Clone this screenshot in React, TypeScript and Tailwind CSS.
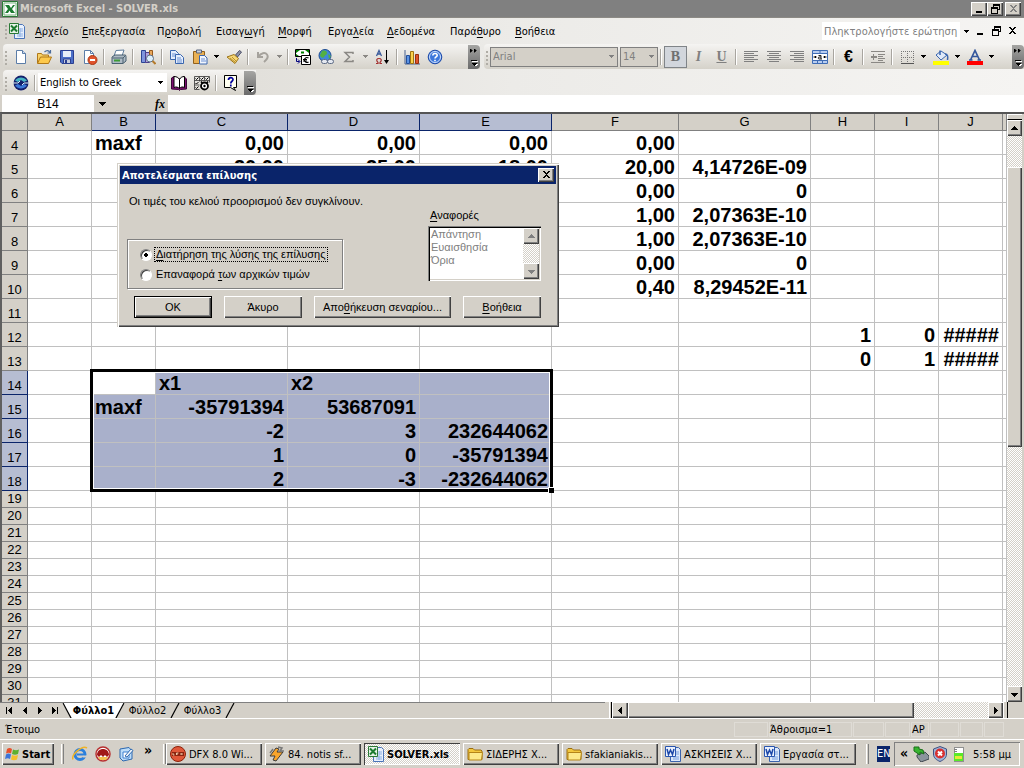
import type { ReactNode } from 'react';
import clsx from 'clsx';

const RAISED = 'bg-[#d4d0c8] shadow-[inset_1px_1px_0_#ffffff,inset_-1px_-1px_0_#404040,inset_-2px_-2px_0_#808080]';
const HATCH = 'bg-[repeating-conic-gradient(#ffffff_0%_25%,#d4d0c8_0%_50%)] bg-[length:2px_2px]';
const BAR = 'bg-gradient-to-b from-[#f5f4f2] to-[#d5d2ca] rounded-l-sm';

// "_" marks the letter that carries the keyboard accelerator
function Accel({ text }: { text: string }) {
  const i = text.indexOf('_');
  if (i < 0) return <>{text}</>;
  return (
    <span>
      {text.slice(0, i)}
      <u className="underline-offset-2">{text[i + 1]}</u>
      {text.slice(i + 2)}
    </span>
  );
}

function Svg({ children, className = 'w-4 h-4', box = '0 0 16 16', crisp = false }: { children: ReactNode; className?: string; box?: string; crisp?: boolean }) {
  return (
    <svg viewBox={box} className={clsx('shrink-0', className)} fill="none" shapeRendering={crisp ? 'crispEdges' : undefined} aria-hidden="true">
      {children}
    </svg>
  );
}

function Arrow({ dir = 'down', color = '#000' }: { dir?: 'down' | 'up' | 'left' | 'right'; color?: string }) {
  const d = {
    down: 'M0 2h7v1H0zM1 3h5v1H1zM2 4h3v1H2zM3 5h1v1H3z',
    up: 'M3 1h1v1H3zM2 2h3v1H2zM1 3h5v1H1zM0 4h7v1H0z',
    left: 'M4 0h1v7H4zM3 1h1v5H3zM2 2h1v3H2zM1 3h1v1H1z',
    right: 'M2 0h1v7H2zM3 1h1v5H3zM4 2h1v3H4zM5 3h1v1H5z',
  }[dir];
  return (
    <Svg box="0 0 7 7" className="w-[7px] h-[7px]" crisp>
      <path d={d} fill={color} />
    </Svg>
  );
}

function SmallArrow({ color = '#000' }: { color?: string }) {
  return (
    <Svg box="0 0 5 3" className="w-[5px] h-[3px]" crisp>
      <path d="M0 0h5v1H0zM1 1h3v1H1zM2 2h1v1H2z" fill={color} />
    </Svg>
  );
}

const excelIcon = (
  <Svg>
    <path d="M.5.5h15v15H.5z" fill="#eef6ee" stroke="#2b7a36" />
    <path d="M2 2h12v12H2z" fill="#fff" stroke="#7db584" />
    <path d="M3 4h4l2 3 2-3h2l-3 4 3 4H9L7.500 9.500 6 12H3l3-4z" fill="#1c7c30" />
  </Svg>
);

const excelDoc = (
  <Svg>
    <path d="M5.500 1.500h8l2 2v12h-10z" fill="#e8f0fc" stroke="#4a74b8" />
    <path d="M11 6h3M11 8h3M8 11h6M8 13h6M11 5v9" stroke="#8db0e4" />
    <path d="M.5.500h9v10h-9z" fill="#e7f3e8" stroke="#2b7a36" />
    <path d="m2 2.500 6 6M8 2.500l-6 6" stroke="#1c7c30" strokeWidth="2" />
  </Svg>
);

const wordDoc = (
  <Svg>
    <path d="M5.500 1.500h8l2 2v12h-10z" fill="#dce8fb" stroke="#3a62ac" />
    <path d="M11 6h3M11 8h3M8 11h6M8 13h6" stroke="#7b9fdc" />
    <path d="M.5.500h10v10H.5z" fill="#eaf1fd" stroke="#2a56b0" />
    <path d="m2 3 1.500 5.500L5.500 4l2 4.500L9 3" stroke="#1b46a8" strokeWidth="1.500" />
  </Svg>
);

const folder = (
  <Svg>
    <path d="M1 13.500V3.500L2 2.500h4l1.500 1.500H14l1 1v8.500z" fill="#f3c73e" stroke="#9a6d10" />
    <path d="M2 6.500h13.500l-1 7.500H2z" fill="#fde98a" stroke="#b58418" />
  </Svg>
);

const icons = {
  blank: <Svg><path d="M3.500 1.500h6l3 3v10h-9z" fill="#fff" stroke="#5b7da8" /><path d="M9.500 1.500v3h3" fill="#cfdcf0" stroke="#5b7da8" /></Svg>,
  open: (
    <Svg>
      <path d="M1.500 14V4.500h4l1 1.500h6V8" fill="#f8d268" stroke="#b07818" />
      <path d="m1.500 14.500 3-6.500h11l-3 6.500z" fill="#fdc94c" stroke="#b07818" />
      <path d="M8.500 3c2-2 4-2 5.500.5M14.500 1v3h-3" stroke="#4d6d9c" strokeWidth="1.200" />
    </Svg>
  ),
  save: <Svg><path d="M1.500 1.500h13v13H3l-1.500-1.500z" fill="#4c6fc8" stroke="#2b3f90" /><path d="M4 2h8v6H4z" fill="#e6edf9" /><path d="M4.500 10h7v4.500h-7z" fill="#c7cede" stroke="#2b3f90" /><path d="M6 11h2v3H6z" fill="#2b3f90" /></Svg>,
  permission: <Svg><path d="M2.500 1.500h6l3 3v10h-9z" fill="#fff" stroke="#5b7da8" /><path d="M8.500 1.500v3h3" stroke="#5b7da8" /><circle cx="10.500" cy="11" r="4.500" fill="#e0532c" stroke="#a93814" /><path d="M8 11h5" stroke="#fff" strokeWidth="2" /></Svg>,
  print: <Svg><path d="m5 1.500 8-.5-2 6H3z" fill="#fff" stroke="#5d7c9c" /><path d="m1 8 3-2h10.500l.5 1.500V12l-3 2.500H1z" fill="#aebac4" stroke="#4a6070" /><path d="M1.500 9H12l2-2M12 9v5" stroke="#4a6070" /><path d="M3 11.500h6" stroke="#3d9c36" strokeWidth="2" /></Svg>,
  research: <Svg><path d="M1.500 1.500h4v12h-4z" fill="#7f94dc" stroke="#2c4594" /><path d="M5.500 3.500h4v10h-4z" fill="#b0a3dc" stroke="#4b3f8e" /><path d="M9.500 1.500h3v6h-3z" fill="#e9a85c" stroke="#985a1c" /><circle cx="10" cy="9.500" r="3.500" fill="#dceffc" stroke="#5f7188" /><path d="m12.500 12 3 3" stroke="#b47b2c" strokeWidth="2" /></Svg>,
  copy: <Svg><path d="M1.500 1.500h5l3 3v6h-8z" fill="#e5eefc" stroke="#3a66ae" /><path d="M3 5h4M3 7h4" stroke="#6c92d4" /><path d="M6.500 5.500h5l3 3v6h-8z" fill="#e5eefc" stroke="#3a66ae" /><path d="M8 9h4M8 11h5M8 13h5" stroke="#6c92d4" /></Svg>,
  paste: <Svg><path d="M1.500 2.500h11v12h-11z" fill="#eab153" stroke="#91601c" /><path d="M4.500 1h5v3h-5z" fill="#c9cfda" stroke="#58647c" /><path d="M7.500 6.500h5l2.500 2.500v6H7.500z" fill="#f1f5fd" stroke="#3a66ae" /><path d="M9 10h4M9 12h5" stroke="#6c92d4" /></Svg>,
  brush: <Svg><path d="m9.500 6 4-4.500 2 1.500-4 5z" fill="#8d93a8" stroke="#4c4f66" /><path d="m1 8 7-2.500 4.500 4-3.500 5z" fill="#f6d775" stroke="#9c7418" /><path d="m4 9 5 4M6 8l4 4" stroke="#b88e2c" /></Svg>,
  undo: <Svg><path d="M3 3v5h5M3.500 7.500C6 4 10 3 12 5.500s0 5-3 7.500" stroke="#a5a29c" strokeWidth="2" /></Svg>,
  euro: (
    <Svg>
      <path d="M.5.500h14v7H.5z" fill="#fff" stroke="#000" />
      <path d="M1 1h4L1 4zM14 1h-4l4 3zM1 7V5l3 2z" fill="#008000" />
      <path d="M6 3.500h3" stroke="#008000" strokeWidth="2" />
      <path d="M6.500 6.500h9v9h-9z" fill="#fff" stroke="#000" />
      <path d="M13.500 9c-1.500-1-4-.5-4 2s2.500 3 4 2M8 10.500h4M8 12h4" stroke="#000" strokeWidth="1.200" />
      <path d="M1.500 9v3.500h3M3 10.500l2 2-2 2" stroke="#00007f" />
    </Svg>
  ),
  link: <Svg><circle cx="7" cy="6.500" r="6" fill="#3f87dc" stroke="#1c4a90" /><path d="M4 2c3-1 5 0 5 2s-2 2-3 4-4 0-4-2zM10 5l3 2-2 3z" fill="#53b045" /><rect x="3.500" y="10.500" width="6" height="4" rx="2" fill="#e4e8f0" stroke="#5d6b84" /><rect x="9.500" y="10.500" width="6" height="4" rx="2" fill="#e4e8f0" stroke="#5d6b84" /></Svg>,
  sigma: <Svg><path d="M12 5V3.500H4L8.500 8 4 12.500h8V11" stroke="#8a8884" strokeWidth="1.500" /></Svg>,
  sort: <Svg><path d="M1.500 7 4 1.500 6.500 7M2.500 5h3" stroke="#3a5b9c" strokeWidth="1.300" /><path d="M1 14.500h2v-1C.5 11 2 9.500 4 9.500s3.500 1.500 1 4v1h2" stroke="#a33030" strokeWidth="1.200" /><path d="M11.500 1v12" stroke="#000" /><path d="M9 11h5l-2.500 4z" fill="#000" /></Svg>,
  chart: <Svg><path d="M1 1v14h15" stroke="#4a6390" /><path d="M2.500 6.500h3v8h-3z" fill="#5b93e4" stroke="#24509c" /><path d="M6.500 2.500h3v12h-3z" fill="#fbd24c" stroke="#a07510" /><path d="M11.500 5.500h3v9h-3z" fill="#e0552c" stroke="#97300e" /></Svg>,
  help: <Svg><circle cx="8" cy="8" r="6.800" fill="#3d78dc" stroke="#1d4aa8" /><circle cx="8" cy="8" r="5.500" stroke="#cfe0fa" /><path d="M5.800 6.500C5.800 3.800 10.200 3.800 10.200 6.300 10.200 8 8 7.800 8 9.500M8 10.800v1.400" stroke="#fff" strokeWidth="1.600" /></Svg>,
  alignLeft: <Svg crisp><path d="M1 2.500h14M1 4.500h10M1 6.500h14M1 8.500h10M1 10.500h14M1 12.500h10" stroke="#808080" /></Svg>,
  alignCenter: <Svg crisp><path d="M1 2.500h14M3 4.500h10M1 6.500h14M3 8.500h10M1 10.500h14M3 12.500h10" stroke="#808080" /></Svg>,
  alignRight: <Svg crisp><path d="M1 2.500h14M5 4.500h10M1 6.500h14M5 8.500h10M1 10.500h14M5 12.500h10" stroke="#808080" /></Svg>,
  merge: (
    <Svg>
      <path d="M.5 1.500h15v13H.5z" fill="#b8cdf0" stroke="#3f6cb4" />
      <path d="M8 2v2.500M5.500 12v2M10.500 12v2" stroke="#3f6cb4" />
      <path d="M.5 4.500h15v7H.5z" fill="#fff" stroke="#3f6cb4" />
      <path d="M1.500 8h3M11.500 8h3M3.500 7v2M12.500 7v2" stroke="#000" strokeWidth="1.200" />
      <path d="M6.500 6.500h2.500v3.500H7c-1 0-1-2 0-2h2M9 10h1" stroke="#222" />
    </Svg>
  ),
  indent: <Svg crisp><path d="M1 2.500h14M8 5.500h7M8 7.500h5M8 9.500h7M8 11.500h5M1 13.500h14" stroke="#8a8884" /><path d="M1 7h6v2H1zM3 5h1v6H3z" fill="#8a8884" /></Svg>,
  borders: <Svg crisp><path d="M2 2.500h13M2.500 2v12M14.500 2v12M8.500 2v12M2 8.500h13" stroke="#777" strokeDasharray="1 1" /><path d="M2 14.500h13" stroke="#555" /></Svg>,
  fill: <Svg><path d="m3 6 5-4 6 4-6 5z" fill="#dfe9f8" stroke="#3a66ae" /><path d="M7 6V1.500M12 5c3 0 3 3 2.500 6" stroke="#3a66ae" strokeWidth="1.500" /><path d="M0 12h16v4H0z" fill="#ffff00" /></Svg>,
  fontColor: <Svg><path d="M3.500 11 8 1.500 12.500 11M5 7.500h6M2 11h3.500M10.500 11H14" stroke="#33569c" strokeWidth="1.700" /><path d="M0 12h16v4H0z" fill="#ff0000" /></Svg>,
  globe: <Svg><circle cx="8" cy="8" r="7.500" fill="#14206c" /><path d="M2 5.500c3-4 9-4 12 0L11 7 8 5 5 7z" fill="#46b4c4" /><path d="M2 10.500c3 4 9 4 12 0L11 9l-3 2-3-2z" fill="#3c78d8" /><path d="M0 8h5l2-2M16 8h-5l-2 2" stroke="#d8ecf8" /></Svg>,
  book: (
    <Svg>
      <path d="M.5 3 3 1.500l5.500 2.500L13 1.500 15.500 4v10l-6 .500-1 1-1-1-7-.500z" fill="#7c1070" stroke="#3a0838" />
      <path d="M3 1.500c2.500 0 4.500 1 5.500 3v9C7 12 5 11.500 3 12.500zM13.500 1.500c-2.500 0-4 1-5 3v9c1-1.500 3-2 5-1z" fill="#fff" stroke="#000" />
    </Svg>
  ),
  checks: (
    <Svg>
      <path d="M.5 1.500h15v6M.5 1.500v13h5M.5 5.500h15M.5 10h5M5.500 1.500v5M10.500 1.500v4" stroke="#333" strokeWidth=".8" />
      <path d="m1.500 3.500 1 1 2-2M6.500 3.500l1 1 2-2M11.500 3.500l1 1 2-2M1.500 8l1 1 2-2M1.500 12.500l1 1 2-2" stroke="#000" />
      <circle cx="10.500" cy="11" r="3.500" fill="#fff" stroke="#000" strokeWidth="1.800" />
      <circle cx="10.500" cy="11" r="1.200" fill="#000" />
      <path d="m7 6.500 1.500 2M14 6.500l-1.500 2" stroke="#000" strokeWidth="1.500" />
    </Svg>
  ),
  question: <Svg><path d="M1.500.5h12v12h-3l2 3-5-3h-6z" fill="#fffff0" stroke="#000" /><path d="M5.500 5C5.500 2 10 2 10 4.500 10 6.500 7.800 6 7.800 8.500M7.800 9.500v2" stroke="#00009c" strokeWidth="1.700" /></Svg>,
};

function Tool({ label, children, pressed = false }: { label: string; children: ReactNode; pressed?: boolean }) {
  return (
    <button type="button" aria-label={label} className={clsx('w-[23px] h-[22px] shrink-0 flex items-center justify-center', pressed && 'border border-[#808488] bg-[#d2d6dc]')}>
      {children}
    </button>
  );
}

function DropTool({ label, color }: { label: string; color?: string }) {
  return (
    <button type="button" aria-label={label} className="w-[11px] h-[22px] shrink-0 flex items-center justify-center">
      <SmallArrow color={color} />
    </button>
  );
}

function Sep() {
  return (
    <span className="w-[6px] shrink-0 flex justify-center">
      <span className="w-[2px] h-4 border-l border-[#a8a59f] border-r border-r-white" />
    </span>
  );
}

function Grip() {
  return (
    <Svg box="0 0 6 20" className="w-[6px] h-5" crisp>
      <path d="M2 4h2v2H2M2 8h2v2H2M2 12h2v2H2M2 16h2v2H2" fill="#b0ada6" />
    </Svg>
  );
}

function Overflow({ more = true }: { more?: boolean }) {
  return (
    <button type="button" aria-label="Toolbar options" className="w-3 h-6 shrink-0 rounded-r-sm bg-gradient-to-b from-[#a5a5a3] to-[#6b6b6b] flex items-center justify-center">
      <Svg box="0 0 12 24" className="w-3 h-6" crisp>
        {more && <path d="M2 4h1v1h1v1H3v1H2zM6 4h1v1h1v1H7v1H6z" fill="#000" stroke="#000" strokeWidth=".5" />}
        <path d="M4 16h6v1H4zM5 19h5v1H5zM6 20h3v1H6z" fill="#fff" />
        <path d="M3 15h6v1H3zM4 18h5v1H4zM5 19h3v1H5zM6 20h1v1H6z" fill="#000" />
      </Svg>
    </button>
  );
}

const winGlyph = {
  min: <path d="M2 8h6v2H2z" fill="currentColor" />,
  restore: <path d="M3 1h7v6H8v4H1V4h2zM4 3v1h4v2h1V3zM2 6v4h5V6z" fill="currentColor" fillRule="evenodd" />,
  close: <path d="M2 2h2v1h1v1h1V3h1V2h2v1H8v1H7v1H6v1h1v1h1v1h1v1H7V8H6V7H5v1H4v1H2V8h1V7h1V6h1V5H4V4H3V3H2z" fill="currentColor" />,
};

function WinButton({ kind, label, flat = false, className }: { kind: keyof typeof winGlyph; label: string; flat?: boolean; className?: string }) {
  return (
    <button type="button" aria-label={label} className={clsx('w-4 h-[14px] shrink-0 flex items-center justify-center', !flat && RAISED, className)}>
      <Svg box="0 0 11 12" className="w-[11px] h-3" crisp>{winGlyph[kind]}</Svg>
    </button>
  );
}

const menu = [
  ['_Αρχείο', 'w-[47px]'],
  ['_Επεξεργασία', 'w-[75px]'],
  ['Π_ροβολή', 'w-[59px]'],
  ['Εισαγ_ωγή', 'w-[62px]'],
  ['_Μορφή', 'w-[50px]'],
  ['Εργα_λεία', 'w-[59px]'],
  ['_Δεδομένα', 'w-[63px]'],
  ['Παρά_θυρο', 'w-[65px]'],
  ['_Βοήθεια', 'w-[50px]'],
];

function Header() {
  return (
    <header className="shrink-0">
      <div className="h-[18px] bg-[#808080] text-[#d4d0c8] flex items-center pl-[2px] pr-[3px] border-b border-[#8c8a85]">
        {excelIcon}
        <h1 className="flex-1 pl-[2px] font-bold">Microsoft Excel - SOLVER.xls</h1>
        <WinButton kind="min" label="Minimize" className="text-black" />
        <WinButton kind="restore" label="Restore" className="text-black mr-[2px]" />
        <WinButton kind="close" label="Close" className="text-[#808080]" />
      </div>
      <div className="bg-gradient-to-r from-[#d8d5ce] via-[#ecebe8] to-[#f5f4f2]">
        <div className="h-[26px] flex items-center pl-[3px] pr-1">
          <Grip />
          {excelDoc}
          <nav className="flex pl-[10px] flex-1">
            {menu.map(([text, width]) => (
              <button key={text} type="button" className={clsx('text-left whitespace-nowrap', width)}><Accel text={text} /></button>
            ))}
          </nav>
          <input aria-label="Ask a question" placeholder="Πληκτρολογήστε ερώτηση" className="w-[138px] h-[18px] bg-white px-[2px] placeholder:text-[#808080] outline-none" />
          <span className="w-3 h-[18px] flex items-center justify-center"><SmallArrow /></span>
          <WinButton kind="min" label="Minimize workbook" flat />
          <WinButton kind="restore" label="Restore workbook" flat />
          <WinButton kind="close" label="Close workbook" flat />
        </div>
        <div className="flex gap-1 pl-[3px]">
          <div className={clsx('h-[25px] w-[477px] shrink-0 flex items-center', BAR)}>
            <Grip />
            <Tool label="New">{icons.blank}</Tool>
            <Tool label="Open">{icons.open}</Tool>
            <Tool label="Save">{icons.save}</Tool>
            <Tool label="Permission">{icons.permission}</Tool>
            <Sep />
            <Tool label="Print">{icons.print}</Tool>
            <Sep />
            <Tool label="Research">{icons.research}</Tool>
            <Sep />
            <Tool label="Copy">{icons.copy}</Tool>
            <Tool label="Paste">{icons.paste}</Tool>
            <DropTool label="Paste options" />
            <Tool label="Format painter">{icons.brush}</Tool>
            <Sep />
            <Tool label="Undo">{icons.undo}</Tool>
            <DropTool label="Undo list" color="#8a8884" />
            <Sep />
            <Tool label="Euro conversion">{icons.euro}</Tool>
            <Tool label="Hyperlink">{icons.link}</Tool>
            <Tool label="AutoSum">{icons.sigma}</Tool>
            <DropTool label="Functions" color="#8a8884" />
            <Tool label="Sort ascending">{icons.sort}</Tool>
            <Sep />
            <Tool label="Chart wizard">{icons.chart}</Tool>
            <Tool label="Help">{icons.help}</Tool>
            <span className="flex-1" />
            <Overflow />
          </div>
          <div className={clsx('h-[25px] flex-1 flex items-center', BAR)}>
            <Grip />
            <label className="relative w-[128px] shrink-0">
              <select aria-label="Font" disabled className="appearance-none w-full h-5 block bg-[#d4d0c8] border border-[#808080] px-[2px] text-[#808080] opacity-100">
                <option>Arial</option>
              </select>
              <span className="absolute right-1 top-2"><SmallArrow color="#808080" /></span>
            </label>
            <label className="relative w-[38px] shrink-0 ml-[2px]">
              <select aria-label="Font size" disabled className="appearance-none w-full h-5 block bg-[#d4d0c8] border border-[#808080] px-[2px] text-[#808080] opacity-100">
                <option>14</option>
              </select>
              <span className="absolute right-1 top-2"><SmallArrow color="#808080" /></span>
            </label>
            <Sep />
            <Tool label="Bold" pressed><b className="font-['Liberation_Serif',serif] text-sm text-[#707070]">B</b></Tool>
            <Tool label="Italic"><i className="font-['Liberation_Serif',serif] text-sm font-bold text-[#808080]">I</i></Tool>
            <Tool label="Underline"><u className="font-['Liberation_Serif',serif] text-sm font-bold text-[#808080]">U</u></Tool>
            <Sep />
            <Tool label="Align left">{icons.alignLeft}</Tool>
            <Tool label="Center">{icons.alignCenter}</Tool>
            <Tool label="Align right">{icons.alignRight}</Tool>
            <Tool label="Merge and center">{icons.merge}</Tool>
            <Sep />
            <Tool label="Euro"><b className="font-['Liberation_Sans',sans-serif] text-base">€</b></Tool>
            <Sep />
            <Tool label="Decrease indent">{icons.indent}</Tool>
            <Sep />
            <Tool label="Borders">{icons.borders}</Tool>
            <DropTool label="Border styles" />
            <Tool label="Fill color">{icons.fill}</Tool>
            <DropTool label="Fill colors" />
            <Tool label="Font color">{icons.fontColor}</Tool>
            <DropTool label="Font colors" />
            <span className="flex-1" />
            <Overflow />
          </div>
        </div>
        <div className="pl-[3px] pt-px">
          <div className={clsx('h-[25px] w-[253px] flex items-center', BAR)}>
            <Grip />
            <Tool label="Translate">{icons.globe}</Tool>
            <Sep />
            <label className="relative w-[129px] shrink-0">
              <select aria-label="Language pair" className="appearance-none w-full h-[19px] block bg-white px-[2px] outline-none">
                <option>English to Greek</option>
              </select>
              <span className="absolute right-1 top-2"><SmallArrow /></span>
            </label>
            <Tool label="Dictionary">{icons.book}</Tool>
            <Tool label="Spelling options">{icons.checks}</Tool>
            <Sep />
            <Tool label="About">{icons.question}</Tool>
            <span className="flex-1" />
            <Overflow more={false} />
          </div>
        </div>
      </div>
      <div className="h-[17px] flex bg-[#d4d0c8] pl-[2px] font-['Liberation_Sans',sans-serif] text-xs">
        <input aria-label="Name box" defaultValue="B14" className="w-[92px] bg-white text-center outline-none" />
        <button type="button" aria-label="Named ranges" className="w-4 flex items-center justify-center"><Arrow /></button>
        <button type="button" aria-label="Insert function" className="w-[58px] text-right pr-[3px] leading-4 font-['Liberation_Serif',serif] text-xs italic font-bold">fx</button>
        <input aria-label="Formula" className="flex-1 bg-white outline-none" />
      </div>
    </header>
  );
}

const columns = ['A', 'B', 'C', 'D', 'E', 'F', 'G', 'H', 'I', 'J', ''];
const colWidths = ['w-[64px]', 'w-[64px]', 'w-[132px]', 'w-[132px]', 'w-[132px]', 'w-[127px]', 'w-[132px]', 'w-[64px]', 'w-[64px]', 'w-[64px]', ''];

const cells: Record<string, string> = {
  B4: 'maxf', C4: '0,00', D4: '0,00', E4: '0,00', F4: '0,00',
  C5: '20,00', D5: '25,00', E5: '18,00', F5: '20,00', G5: '4,14726E-09',
  F6: '0,00', G6: '0',
  F7: '1,00', G7: '2,07363E-10',
  F8: '1,00', G8: '2,07363E-10',
  F9: '0,00', G9: '0',
  F10: '0,40', G10: '8,29452E-11',
  H12: '1', I12: '0', J12: '#####',
  H13: '0', I13: '1', J13: '#####',
  C14: 'x1', D14: 'x2',
  B15: 'maxf', C15: '-35791394', D15: '53687091',
  C16: '-2', D16: '3', E16: '232644062',
  C17: '1', D17: '0', E17: '-35791394',
  C18: '2', D18: '-3', E18: '-232644062',
};

const rows = Array.from({ length: 28 }, (_, i) => i + 4);
const isText = (v: string) => /^[a-z]/.test(v);
const inSelection = (col: string, row: number) => 'BCDE'.includes(col) && col !== '' && row >= 14 && row <= 18;

function Grid() {
  return (
    <div className="relative flex-1 min-w-0 overflow-hidden bg-white font-['Liberation_Sans',sans-serif]">
      <table className="w-full table-fixed border-separate border-spacing-0">
        <colgroup>
          <col className="w-[26px]" />
          {colWidths.map((w, i) => <col key={i} className={w} />)}
        </colgroup>
        <thead>
          <tr className="h-[17px] text-[13px] leading-4">
            <td className="p-0 bg-[#d4d0c8] border-r border-b border-[#808080]" />
            {columns.map((c, i) => {
              const on = 'BCDE'.includes(c) && c !== '';
              return (
                <th key={i} scope="col" className={clsx('p-0 font-normal border-r border-b', on ? 'bg-[#b6bdd2] border-[#0a246a]' : 'bg-[#d4d0c8] border-[#808080]')}>{c}</th>
              );
            })}
          </tr>
        </thead>
        <tbody>
          {rows.map((r) => {
            const on = r >= 14 && r <= 18;
            return (
              <tr key={r} className={r < 19 ? 'h-6' : 'h-[17px]'}>
                <th scope="row" className={clsx('p-0 align-bottom text-[13px] leading-4 font-normal border-r border-b', on ? 'bg-[#b6bdd2] border-[#0a246a]' : 'bg-[#d4d0c8] border-[#808080]')}>{r}</th>
                {columns.map((c, i) => {
                  const value = cells[c + r] ?? '';
                  return (
                    <td
                      key={i}
                      className={clsx(
                        'p-0 px-[3px] border-r border-b border-[#c0c0c0] whitespace-nowrap text-xl leading-4 font-bold',
                        isText(value) ? 'text-left' : 'text-right',
                        inSelection(c, r) && c + r !== 'B14' && 'bg-[#a9b0cb]',
                      )}
                    >
                      {value}
                    </td>
                  );
                })}
              </tr>
            );
          })}
        </tbody>
      </table>
      {/* selection frame B14:E18 with its fill handle */}
      <div className="absolute left-[88px] top-[255px] w-[463px] h-[123px] border-[3px] border-black shadow-[inset_0_0_0_1px_#ffffff] pointer-events-none">
        <span className="absolute -right-1 -bottom-1 w-[6px] h-[6px] bg-black border-l border-t border-white" />
      </div>
    </div>
  );
}

function VerticalScroll() {
  return (
    <div className={clsx('w-[15px] mr-[2px] shrink-0 flex flex-col', HATCH)}>
      <div className="h-[6px] shrink-0 bg-[#d4d0c8] border-t border-l border-white border-b border-b-black" />
      <button type="button" aria-label="Scroll up" className={clsx('h-4 shrink-0 flex items-center justify-center', RAISED)}><Arrow dir="up" /></button>
      <div className="grow-[31] basis-0" />
      <div className={clsx('grow-[280] basis-0', RAISED)} />
      <div className="grow-[239] basis-0" />
      <button type="button" aria-label="Scroll down" className={clsx('h-4 shrink-0 flex items-center justify-center', RAISED)}><Arrow /></button>
    </div>
  );
}

function NavButton({ label, d }: { label: string; d: string }) {
  return (
    <button type="button" aria-label={label} className="w-[15px] h-[15px] flex items-center justify-center">
      <Svg box="0 0 9 9" className="w-[9px] h-[9px]" crisp><path d={d} fill="#000" /></Svg>
    </button>
  );
}

function Slash({ left, right, back = false }: { left: string; right: string; back?: boolean }) {
  return (
    <Svg box="0 0 10 15" className="w-[10px] h-[15px]">
      <path d={back ? 'M0 0L10 15H0z' : 'M0 0H10L0 15z'} fill={left} />
      <path d={back ? 'M0 0H10V15z' : 'M10 0V15H0z'} fill={right} />
      <path d={back ? 'M1 0l8 15' : 'M9 0L1 15'} stroke="#000" strokeWidth="1.200" />
    </Svg>
  );
}

function SheetTabs() {
  return (
    <div className="h-4 shrink-0 flex bg-[#d4d0c8]">
      <div className="flex-1 flex items-center border-t border-[#808080] pl-[2px]">
        <NavButton label="First sheet" d="M1 1h1v7H1zM6 1h1v7H6zM5 2h1v5H5zM4 3h1v3H4zM3 4h1v1H3z" />
        <NavButton label="Previous sheet" d="M6 1h1v7H6zM5 2h1v5H5zM4 3h1v3H4zM3 4h1v1H3z" />
        <NavButton label="Next sheet" d="M3 1h1v7H3zM4 2h1v5H4zM5 3h1v3H5zM6 4h1v1H6z" />
        <NavButton label="Last sheet" d="M7 1h1v7H7zM2 1h1v7H2zM3 2h1v5H3zM4 3h1v3H4zM5 4h1v1H5z" />
        <Slash left="#d4d0c8" right="#fff" back />
        <button type="button" className="w-[43px] h-[15px] bg-white font-bold text-center">Φύλλο1</button>
        <Slash left="#fff" right="#d4d0c8" />
        <button type="button" className="w-[45px] text-center">Φύλλο2</button>
        <Slash left="#d4d0c8" right="#d4d0c8" />
        <button type="button" className="w-[45px] text-center">Φύλλο3</button>
        <Slash left="#d4d0c8" right="#d4d0c8" />
      </div>
      <div className={clsx('w-[415px] ml-1 shrink-0 flex', HATCH)}>
        <div className="w-[3px] border-l border-white border-r border-r-black bg-[#d4d0c8]" />
        <button type="button" aria-label="Scroll left" className={clsx('w-4 flex items-center justify-center', RAISED)}><Arrow dir="left" /></button>
        <div className={clsx('grow-[286] basis-0', RAISED)} />
        <div className="grow-[74] basis-0" />
        <button type="button" aria-label="Scroll right" className={clsx('w-[15px] flex items-center justify-center', RAISED)}><Arrow dir="right" /></button>
        <div className="w-[5px] border-l border-white border-r border-r-black bg-[#d4d0c8]" />
        <div className="w-4 bg-[#d4d0c8]" />
      </div>
    </div>
  );
}

const statusPanes = [
  ['', 'w-[34px]'],
  ['Άθροισμα=1', 'w-[83px]'],
  ['', 'w-[31px]'],
  ['', 'w-[25px]'],
  ['ΑΡ', 'w-[18px]'],
  ['', 'w-[29px]'],
  ['', 'w-[23px]'],
  ['', 'w-[20px]'],
];

function StatusBar() {
  return (
    <div className="h-[21px] shrink-0 flex items-center bg-[#d4d0c8] border-t border-white pl-[5px] pr-5">
      <span className="flex-1">Έτοιμο</span>
      <div className="flex gap-px">
        {statusPanes.map(([text, width], i) => (
          <span key={i} className={clsx('h-[15px] border border-[#dfdcd6] flex items-center whitespace-nowrap', width)}>{text}</span>
        ))}
      </div>
    </div>
  );
}

const tasks = [
  { text: 'DFX 8.0 Wi...', icon: <Svg><circle cx="8" cy="8" r="7.500" fill="#e0583a" stroke="#8c2008" /><path d="M2 6h12v4H2z" fill="#8c2410" /><path d="M3 7v2h1.500M6.500 9V7H8.500M6.500 8H8M10.500 7l2 2M12.500 7l-2 2" stroke="#ffe4c0" strokeWidth=".8" /></Svg> },
  { text: '84. notis sf...', icon: <Svg><path d="m1 10 6-8 3 1-2 3h6l-7 9-3-1 2-4z" fill="#f9a52c" stroke="#3c3c3c" /><path d="m9 1 4 1-2 3h4M1 7l3-4" stroke="#777" strokeWidth="1.500" /></Svg> },
  { text: 'SOLVER.xls', icon: excelDoc, active: true },
  { text: 'ΣΙΔΕΡΗΣ Χ...', icon: folder },
  { text: 'sfakianiakis...', icon: folder },
  { text: 'ΑΣΚΗΣΕΙΣ Χ...', icon: wordDoc },
  { text: 'Εργασία στ...', icon: wordDoc },
];

function TaskSep() {
  return <span className="w-[3px] h-5 shrink-0 border-l border-white border-r border-r-[#808080]" />;
}

function Taskbar() {
  return (
    <footer className="h-[29px] shrink-0 flex items-center bg-[#d4d0c8] border-t border-white pl-[2px] pr-1">
      <button type="button" className={clsx('w-[52px] h-[22px] shrink-0 flex items-center gap-px pl-[3px] font-bold', RAISED)}>
        <Svg>
          <path d="M2 3c2-1.500 3.500-1 5 0L6 7.500c-1.500-1-3-1-5 0z" fill="#e8502c" />
          <path d="M8 3.500c2 1 4 1 6 0L13 8c-2 1-4 1-6 0z" fill="#5cb030" />
          <path d="M1 8.500c2-1.500 3.500-1 5 0L5 13c-1.500-1-3-1-5 0z" fill="#3c74d8" />
          <path d="M7 9c2 1 4 1 6 0l-1 4.500c-2 1-4 1-6 0z" fill="#f4c02c" />
        </Svg>
        Start
      </button>
      <div className="w-[112px] shrink-0 flex items-center pl-[7px]">
        <TaskSep />
        <div className="flex gap-[7px] pl-2">
          <button type="button" aria-label="Internet Explorer">
            <Svg><circle cx="8" cy="8.500" r="5" stroke="#2c80dc" strokeWidth="3" /><path d="M5 8.500h8" stroke="#2c80dc" strokeWidth="2" /><path d="M11 10.500h4" stroke="#d4d0c8" strokeWidth="2" /><path d="M1 13.500C-1 9 10-1 15 2" stroke="#f0b428" strokeWidth="1.500" /></Svg>
          </button>
          <button type="button" aria-label="Media player">
            <Svg><circle cx="8" cy="8" r="7" fill="#fff" stroke="#b83030" strokeWidth="1.500" /><path d="M2 9c0-8 12-8 12 0l-2 2-2-2-2 2-2-2-2 2z" fill="#a01818" /><path d="M3 11h10l-2 3H5z" fill="#f0c050" /></Svg>
          </button>
          <button type="button" aria-label="Show desktop">
            <Svg><path d="m2 3 9-1.500L14 5v8l-9 2-3-3z" fill="#bcdcf8" stroke="#2c68b0" /><path d="M5 6h6v6H5z" fill="#fff" stroke="#3c80d0" /><path d="m7 10 6-7 2 1.500-6 6.500z" fill="#f4f8fc" stroke="#2c68b0" /></Svg>
          </button>
        </div>
        <button type="button" className="pl-[10px] pb-2 font-bold leading-3 text-sm">»</button>
        <span className="flex-1" />
        <TaskSep />
      </div>
      <nav className="flex-1 flex gap-[3px]">
        {tasks.map((t) => (
          <button
            key={t.text}
            type="button"
            className={clsx(
              'w-24 h-[22px] flex items-center gap-[3px] pl-1 whitespace-nowrap overflow-hidden',
              t.active ? clsx(HATCH, 'font-bold shadow-[inset_1px_1px_0_#404040,inset_-1px_-1px_0_#ffffff]') : RAISED,
            )}
          >
            {t.icon}
            {t.text}
          </button>
        ))}
      </nav>
      <div className="flex items-center shrink-0">
        <TaskSep />
        <span className="ml-2 mr-1 w-[13px] h-4 overflow-hidden bg-[#0a246a] text-white leading-4">EN</span>
        <div className="w-[126px] h-6 flex items-center gap-[3px] pl-1 pr-[9px] shadow-[inset_1px_1px_0_#808080,inset_-1px_-1px_0_#ffffff]">
          <button type="button" className="w-3 font-bold text-sm leading-3 pb-[2px]">«</button>
          <Svg><path d="m4 9 8-3 4 4v3l-8 3-4-5z" fill="#8a949c" stroke="#404850" /><path d="M1 1h5v2l4 1 1 4-4-2v3L1 5z" fill="#38b430" stroke="#187018" /></Svg>
          <Svg><path d="M8 .5 14.500 3v5c0 4-3 6-6.500 7.500C4.500 14 1.500 12 1.500 8V3z" fill="#9cb4d8" stroke="#405080" /><circle cx="8" cy="7.500" r="5" fill="#d83030" /><path d="m6 5.500 4 4M10 5.500l-4 4" stroke="#fff" strokeWidth="2" /></Svg>
          <Svg crisp><path d="M3 1h9v14H3z" fill="#fff" stroke="#909090" /><path d="M3 7h9v8H3z" fill="#58e828" /><path d="M4 10h7v3H4z" fill="#e8e838" /><path d="M3 3h3M3 5h3" stroke="#808080" /></Svg>
          <time className="flex-1 text-right whitespace-nowrap">5:58 μμ</time>
        </div>
      </div>
    </footer>
  );
}

function DialogButton({ text, width, primary = false }: { text: string; width: string; primary?: boolean }) {
  return (
    <button type="button" className={clsx('h-[22px] flex items-center justify-center whitespace-nowrap', width, RAISED, primary && 'border border-black')}>
      <Accel text={text} />
    </button>
  );
}

function SolverDialog() {
  const radio =
    'appearance-none w-3 h-3 shrink-0 rounded-full bg-white border border-t-[#808080] border-l-[#808080] border-b-white border-r-white shadow-[inset_1px_1px_0_#404040] checked:bg-[radial-gradient(circle,#000_0_2px,#fff_2px)]';
  return (
    <div role="dialog" aria-labelledby="solver-title" className="absolute left-[115px] top-[49px] w-[442px] p-[3px] shadow-[inset_1px_1px_0_#d4d0c8,inset_2px_2px_0_#ffffff,inset_-1px_-1px_0_#404040,inset_-2px_-2px_0_#808080] bg-[#d4d0c8] font-['Liberation_Sans',sans-serif]">
      <div className="h-[18px] bg-[#0a246a] text-white flex items-center pl-[2px] pr-[2px]">
        <h2 id="solver-title" className="flex-1 font-bold font-['DejaVu_Sans_Condensed','DejaVu_Sans',sans-serif]">Αποτελέσματα επίλυσης</h2>
        <WinButton kind="close" label="Close dialog" className="text-black" />
      </div>
      <div className="pl-[7px] pr-[15px] pt-[11px] pb-[6px]">
        <div className="flex justify-between">
          <div>
            <p className="pl-[2px] whitespace-nowrap">Οι τιμές του κελιού προορισμού δεν συγκλίνουν.</p>
            <fieldset className="mt-[31px] w-[216px] h-[50px] pl-[12px] flex flex-col justify-center gap-[6px] border border-[#808080] shadow-[inset_1px_1px_0_#ffffff,1px_1px_0_#ffffff]">
              <label className="flex items-center gap-[2px] whitespace-nowrap">
                <input type="radio" name="keep" defaultChecked className={radio} />
                <span className="border border-dotted border-black px-px"><Accel text="_Διατήρηση της λύσης της επίλυσης" /></span>
              </label>
              <label className="flex items-center gap-1 whitespace-nowrap">
                <input type="radio" name="keep" className={radio} />
                <Accel text="Επαναφορά _των αρχικών τιμών" />
              </label>
            </fieldset>
          </div>
          <div className="pt-[14px] w-[113px]">
            <label htmlFor="reports" className="block pl-[2px] pb-[4px]"><Accel text="_Αναφορές" /></label>
            <div className="h-[55px] flex p-[2px] bg-white shadow-[inset_1px_1px_0_#808080,inset_2px_2px_0_#000000,inset_-1px_-1px_0_#ffffff,inset_-2px_-2px_0_#d4d0c8]">
              <select id="reports" multiple disabled className="appearance-none flex-1 min-w-0 h-[51px] overflow-hidden bg-transparent outline-none p-0 text-[#808080] opacity-100">
                {['Απάντηση', 'Ευαισθησία', 'Όρια'].map((o) => <option key={o} className="h-[13px] min-h-0 p-0 px-px leading-[13px] text-[#808080]">{o}</option>)}
              </select>
              <div className={clsx('w-4 flex flex-col justify-between', HATCH)}>
                <span className={clsx('h-4 flex items-center justify-center', RAISED)}><Arrow dir="up" color="#808080" /></span>
                <span className={clsx('h-4 flex items-center justify-center', RAISED)}><Arrow color="#808080" /></span>
              </div>
            </div>
          </div>
        </div>
        <div className="flex justify-between mt-[7px] pl-[7px]">
          <DialogButton text="OK" width="w-[78px]" primary />
          <DialogButton text="Άκυρο" width="w-[78px]" />
          <DialogButton text="Απο_θήκευση σεναρίου..." width="w-[137px]" />
          <DialogButton text="_Βοήθεια" width="w-[78px]" />
        </div>
      </div>
    </div>
  );
}

export default function App() {
  return (
    <div className="h-screen w-full min-w-[1024px] flex flex-col bg-[#d4d0c8] text-black cursor-default font-['DejaVu_Sans_Condensed','DejaVu_Sans',sans-serif] text-[11px] leading-[13px] select-none">
      <Header />
      <main className="relative flex-1 min-h-0 flex border-t-2 border-t-[#555555] border-l-2 border-l-[#606060]">
        <Grid />
        <VerticalScroll />
        <SolverDialog />
      </main>
      <SheetTabs />
      <StatusBar />
      <Taskbar />
    </div>
  );
}
